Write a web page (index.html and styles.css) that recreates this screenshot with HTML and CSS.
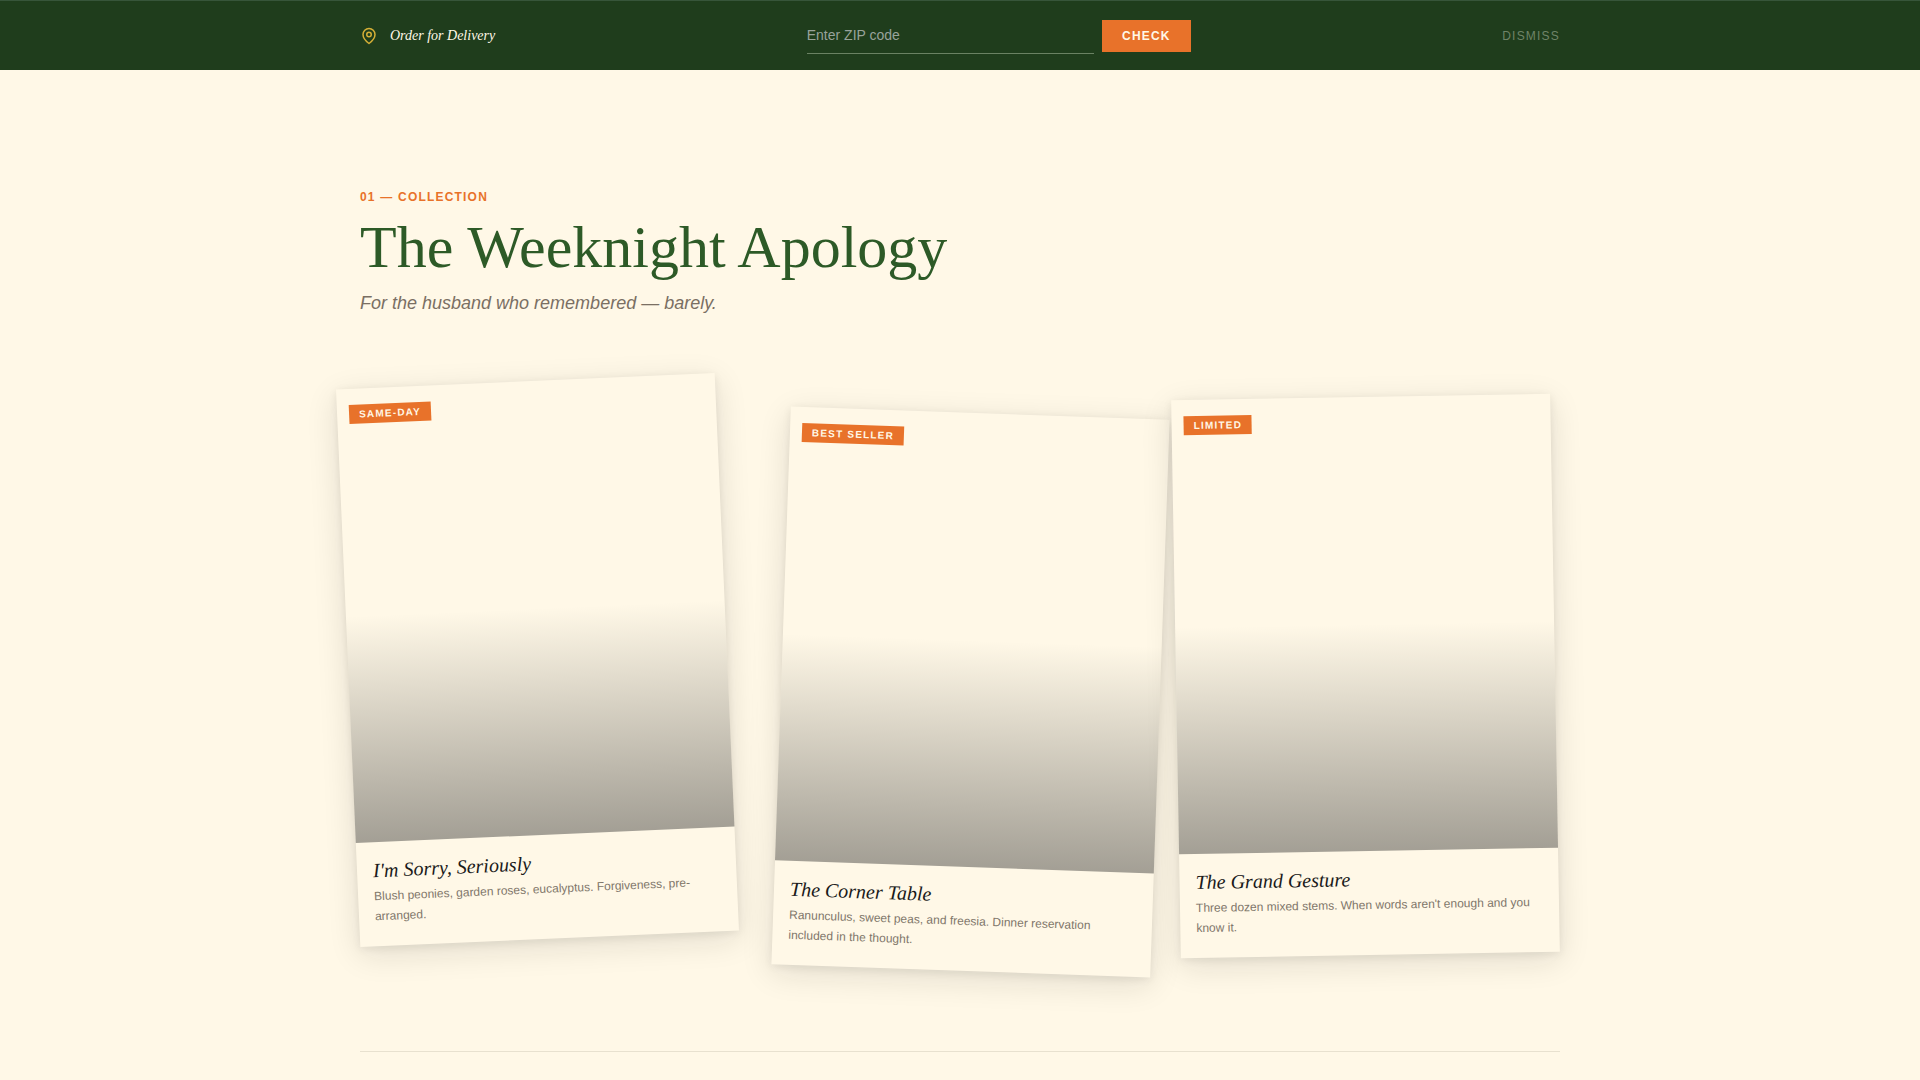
FILE: index.html
```html
<!DOCTYPE html>
<html lang="en">
<head>
<meta charset="utf-8">
<meta name="viewport" content="width=device-width, initial-scale=1">
<title>The Weeknight Apology</title>
<link rel="stylesheet" href="styles.css">
</head>
<body>
<div class="delivery-bar">
  <div class="delivery-inner">
    <label class="delivery-label" for="zip">
      <svg class="pin" viewBox="0 0 24 24" fill="none" stroke="currentColor" stroke-width="2" stroke-linecap="round" stroke-linejoin="round" aria-hidden="true"><path d="M20 10c0 6-8 12-8 12s-8-6-8-12a8 8 0 0 1 16 0Z"/><circle cx="12" cy="10" r="3"/></svg>
      <span>Order for Delivery</span>
    </label>
    <form class="zip-form">
      <input class="zip-input" id="zip" type="text" placeholder="Enter ZIP code" inputmode="numeric">
      <button class="zip-button" type="submit">CHECK</button>
    </form>
    <button class="dismiss" type="button">DISMISS</button>
  </div>
</div>
<main class="page">
  <section class="collection">
    <header class="collection-head">
      <p class="eyebrow">01 — COLLECTION</p>
      <h1 class="title">The Weeknight Apology</h1>
      <p class="subtitle">For the husband who remembered — barely.</p>
    </header>
    <div class="cards">
      <article class="card card-left">
        <div class="photo"><span class="badge">SAME-DAY</span></div>
        <div class="card-body">
          <h2 class="card-title">I'm Sorry, Seriously</h2>
          <p class="card-text">Blush peonies, garden roses, eucalyptus. Forgiveness, pre-arranged.</p>
        </div>
      </article>
      <article class="card card-middle">
        <div class="photo"><span class="badge">BEST SELLER</span></div>
        <div class="card-body">
          <h2 class="card-title">The Corner Table</h2>
          <p class="card-text">Ranunculus, sweet peas, and freesia. Dinner reservation included in the thought.</p>
        </div>
      </article>
      <article class="card card-right">
        <div class="photo"><span class="badge">LIMITED</span></div>
        <div class="card-body">
          <h2 class="card-title">The Grand Gesture</h2>
          <p class="card-text">Three dozen mixed stems. When words aren't enough and you know it.</p>
        </div>
      </article>
    </div>
  </section>
</main>
</body>
</html>
```
FILE: styles.css
```css
:root {
  --cream: #fff8e7;
  --forest: #1f3d1c;
  --green: #2d5a27;
  --orange: #e8722a;
  --gold: #d4af37;
  --ink: #1a1a1a;
  --muted: #7a6f63;
  --sans: "Liberation Sans", Arial, sans-serif;
  --serif: "Liberation Serif", "Times New Roman", serif;
}

* {
  box-sizing: border-box;
  margin: 0;
}

body {
  background: var(--cream);
  color: var(--ink);
  font-family: var(--sans);
}

.delivery-bar {
  background: var(--forest);
  border-top: 1px solid #37553a;
  padding: 16px 32px;
}

.delivery-inner {
  max-width: 1200px;
  margin: 0 auto;
  display: flex;
  align-items: center;
  justify-content: space-between;
}

.delivery-label {
  display: flex;
  align-items: center;
  gap: 12px;
  color: var(--cream);
  font: italic 14px/20px var(--serif);
}

.pin {
  width: 18px;
  height: 18px;
  color: var(--gold);
}

.zip-form {
  display: flex;
  align-items: center;
  gap: 8px;
  flex: 0 1 384px;
}

.zip-input {
  flex: 1;
  min-width: 0;
  padding: 10px 0;
  border: 0;
  border-bottom: 1px solid #6a8263;
  background: none;
  color: var(--cream);
  font: 14px/16px var(--sans);
}

.zip-input::placeholder {
  color: #98a39b;
}

.zip-button {
  padding: 8px 20px;
  border: 0;
  background: var(--orange);
  color: var(--cream);
  font: bold 12px/16px var(--sans);
  letter-spacing: 0.1em;
}

.dismiss {
  padding: 0;
  border: 0;
  background: none;
  color: #6f8468;
  font: 12px/16px var(--sans);
  letter-spacing: 0.1em;
}

.page {
  padding: 0 32px 96px;
}

.collection {
  max-width: 1200px;
  margin: 0 auto;
  padding: 117px 0 104px;
  border-bottom: 1px solid #e8e1cf;
}

.collection-head {
  margin-bottom: 72px;
}

.eyebrow {
  color: var(--orange);
  font: bold 12px/20px var(--sans);
  letter-spacing: 0.1em;
}

.title {
  margin: 8px 0;
  color: var(--green);
  font: 400 60px/64px var(--serif);
}

.subtitle {
  padding-top: 2px;
  color: var(--muted);
  font: italic 18px/28px var(--sans);
}

.cards {
  display: grid;
  grid-template-columns: repeat(3, 1fr);
  gap: 32px;
}

.card {
  background: var(--cream);
  box-shadow: 0 8px 32px rgba(26, 26, 26, 0.12), 0 2px 8px rgba(26, 26, 26, 0.08);
}

.card-left {
  transform: translate(-12px, -8px) rotate(-2.5deg);
}

.card-middle {
  transform: translate(10px, 24px) rotate(2deg);
}

.card-right {
  transform: translate(-5px, 8px) rotate(-1deg);
}

.photo {
  position: relative;
  aspect-ratio: 5 / 6;
  background: linear-gradient(to top, rgba(26, 26, 26, 0.4), rgba(26, 26, 26, 0) 50%);
}

.badge {
  position: absolute;
  top: 16px;
  left: 12px;
  padding: 4px 10px;
  background: var(--orange);
  color: var(--cream);
  font: bold 10px/11px var(--sans);
  letter-spacing: 0.12em;
}

.card-body {
  padding: 16px 16px 20px;
}

.card-title {
  margin-bottom: 4px;
  font: italic 400 20px/24px var(--serif);
}

.card-text {
  color: #80766a;
  font: 12px/20px var(--sans);
}
```
